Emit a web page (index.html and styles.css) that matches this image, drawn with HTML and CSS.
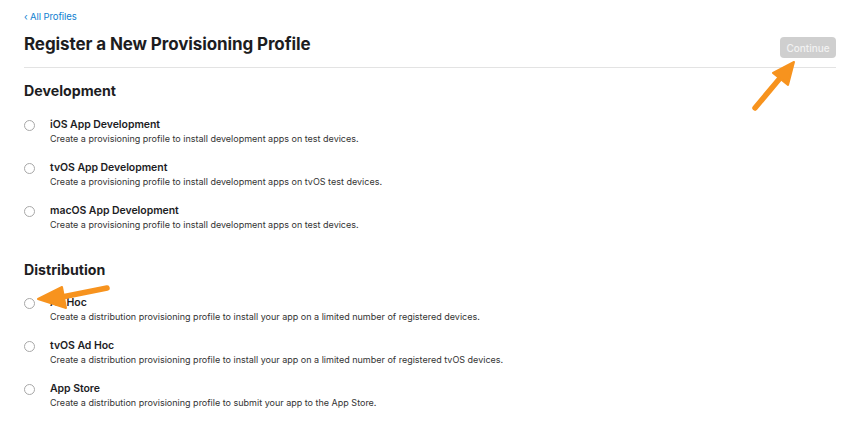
FILE: index.html
```html
<!DOCTYPE html>
<html>
<head>
<meta charset="utf-8">
<link rel="stylesheet" href="styles.css">
</head>
<body>
<div class="page">
  <a class="back" href="#">&#8249; All Profiles</a>
  <div class="header">
    <h1 class="title">Register a New Provisioning Profile</h1>
    <button class="continue" disabled>Continue</button>
  </div>
  <section class="group">
    <h2 class="group-title">Development</h2>
    <div class="option">
      <span class="radio"></span>
      <div class="option-text">
        <div class="option-name">iOS App Development</div>
        <div class="option-desc">Create a provisioning profile to install development apps on test devices.</div>
      </div>
    </div>
    <div class="option">
      <span class="radio"></span>
      <div class="option-text">
        <div class="option-name">tvOS App Development</div>
        <div class="option-desc">Create a provisioning profile to install development apps on tvOS test devices.</div>
      </div>
    </div>
    <div class="option">
      <span class="radio"></span>
      <div class="option-text">
        <div class="option-name">macOS App Development</div>
        <div class="option-desc">Create a provisioning profile to install development apps on test devices.</div>
      </div>
    </div>
  </section>
  <section class="group">
    <h2 class="group-title">Distribution</h2>
    <div class="option">
      <span class="radio"></span>
      <div class="option-text">
        <div class="option-name">Ad Hoc</div>
        <div class="option-desc">Create a distribution provisioning profile to install your app on a limited number of registered devices.</div>
      </div>
    </div>
    <div class="option">
      <span class="radio"></span>
      <div class="option-text">
        <div class="option-name">tvOS Ad Hoc</div>
        <div class="option-desc">Create a distribution provisioning profile to install your app on a limited number of registered tvOS devices.</div>
      </div>
    </div>
    <div class="option">
      <span class="radio"></span>
      <div class="option-text">
        <div class="option-name">App Store</div>
        <div class="option-desc">Create a distribution provisioning profile to submit your app to the App Store.</div>
      </div>
    </div>
  </section>
</div>
<svg class="annotations" width="855" height="422" viewBox="0 0 855 422">
  <g fill="#f7931e" stroke="#f7931e" stroke-linecap="round" stroke-linejoin="round">
    <line x1="755" y1="108" x2="781" y2="77" stroke-width="5.5"/>
    <polygon points="794,62 773,73 788,85" stroke-width="2"/>
    <line x1="107" y1="288" x2="62" y2="297" stroke-width="5.5"/>
    <polygon points="38,299 62,287 66,308" stroke-width="2"/>
  </g>
</svg>
</body>
</html>
```

FILE: styles.css
```css
html, body {
  margin: 0;
  padding: 0;
  background: #ffffff;
}
body {
  font-family: Inter, "Noto Sans", "Liberation Sans", sans-serif;
  color: #1d1d1f;
  position: relative;
  width: 855px;
  height: 422px;
  overflow: hidden;
}
.page {
  padding: 10px 19px 0 24px;
}
.back {
  display: block;
  font-size: 9.5px;
  line-height: 13px;
  letter-spacing: -0.1px;
  color: #0f80d0;
  text-decoration: none;
}
.header {
  display: flex;
  justify-content: space-between;
  align-items: flex-start;
  padding: 9px 0 9px;
  border-bottom: 1px solid #e3e3e3;
}
.title {
  margin: 0;
  font-size: 17px;
  line-height: 24px;
  font-weight: 700;
  letter-spacing: -0.1px;
}
.continue {
  margin-top: 5px;
  width: 56px;
  height: 21px;
  border: none;
  border-radius: 4px;
  background: #cfcfcf;
  color: #f2f2f2;
  font-family: inherit;
  font-size: 10px;
  font-weight: 500;
  padding: 0;
}
.group {
  padding-top: 13px;
}
.group + .group {
  padding-top: 14px;
}
.group-title {
  margin: 0 0 15.5px;
  font-size: 14.2px;
  line-height: 20px;
  font-weight: 700;
}
.option {
  display: flex;
  align-items: flex-start;
  margin-bottom: 14px;
}
.radio {
  flex: none;
  width: 9px;
  height: 9px;
  border: 1px solid #a8a8a8;
  border-radius: 50%;
  margin: 3px 15px 0 0;
}
.option-name {
  font-size: 10.5px;
  line-height: 15px;
  font-weight: 600;
  letter-spacing: -0.05px;
  color: #1d1d1f;
}
.option-desc {
  font-size: 9px;
  line-height: 14px;
  color: #333333;
}
.annotations {
  position: absolute;
  left: 0;
  top: 0;
  pointer-events: none;
}
```
